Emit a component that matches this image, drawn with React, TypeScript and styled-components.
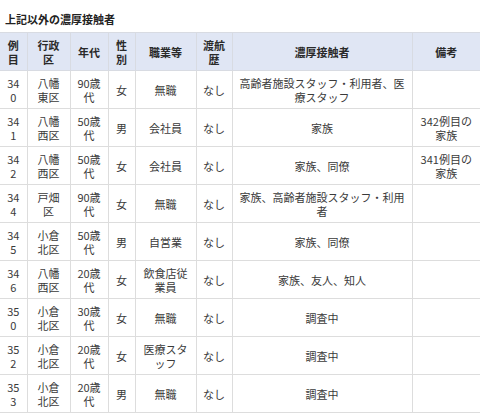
import styled, { createGlobalStyle } from "styled-components";

const GlobalStyle = createGlobalStyle`
  html, body {
    margin: 0;
    padding: 0;
    background: #ffffff;
  }
  body {
    font-family: "Noto Sans CJK JP", "Noto Sans", sans-serif;
    color: #333333;
  }
`;

const Page = styled.div`
  width: 480px;
  overflow: hidden;
`;

const Title = styled.h3`
  margin: 0;
  padding: 12px 5px 6px;
  font-size: 11px;
  line-height: 14px;
  font-weight: 700;
  color: #222222;
`;

const Table = styled.table`
  width: 480px;
  border-collapse: collapse;
  table-layout: fixed;
  font-size: 11px;
  line-height: 14px;
`;

const HeadCell = styled.th`
  background-color: #e0e6f4;
  color: #2a2a2a;
  font-weight: 700;
  text-align: center;
  vertical-align: middle;
  padding: 4.5px 6px;
  border: 1px solid #d8dbe2;
  word-break: break-all;

  &:first-child {
    border-left: none;
  }
  &:last-child {
    border-right: none;
  }
`;

const Cell = styled.td`
  text-align: center;
  vertical-align: middle;
  padding: 4.5px 6px;
  border: 1px solid #dddddd;
  color: #3a3a3a;
  word-break: break-all;
  line-break: loose;

  &:first-child {
    border-left: none;
  }
  &:last-child {
    border-right: none;
  }
`;

const widths = [27, 43, 38, 27, 61, 36, 180, 68];

const headers = ["例目", "行政区", "年代", "性別", "職業等", "渡航歴", "濃厚接触者", "備考"];

const rows: string[][] = [
  ["340", "八幡東区", "90歳代", "女", "無職", "なし", "高齢者施設スタッフ・利用者、医療スタッフ", ""],
  ["341", "八幡西区", "50歳代", "男", "会社員", "なし", "家族", "342例目の家族"],
  ["342", "八幡西区", "50歳代", "女", "会社員", "なし", "家族、同僚", "341例目の家族"],
  ["344", "戸畑区", "90歳代", "女", "無職", "なし", "家族、高齢者施設スタッフ・利用者", ""],
  ["345", "小倉北区", "50歳代", "男", "自営業", "なし", "家族、同僚", ""],
  ["346", "八幡西区", "20歳代", "女", "飲食店従業員", "なし", "家族、友人、知人", ""],
  ["350", "小倉北区", "30歳代", "女", "無職", "なし", "調査中", ""],
  ["352", "小倉北区", "20歳代", "女", "医療スタッフ", "なし", "調査中", ""],
  ["353", "小倉北区", "20歳代", "男", "無職", "なし", "調査中", ""],
];

const App = () => {
  return (
    <Page>
      <GlobalStyle />
      <Title>上記以外の濃厚接触者</Title>
      <Table>
        <colgroup>
          {widths.map((w, i) => (
            <col key={i} style={{ width: w }} />
          ))}
        </colgroup>
        <thead>
          <tr>
            {headers.map((h) => (
              <HeadCell key={h}>{h}</HeadCell>
            ))}
          </tr>
        </thead>
        <tbody>
          {rows.map((r) => (
            <tr key={r[0]}>
              {r.map((c, i) => (
                <Cell key={i}>{c}</Cell>
              ))}
            </tr>
          ))}
        </tbody>
      </Table>
    </Page>
  );
};

export default App;
